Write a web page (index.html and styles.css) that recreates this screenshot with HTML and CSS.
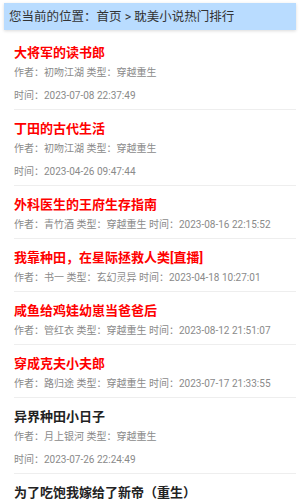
FILE: index.html
```html
<!DOCTYPE html>
<html lang="zh-CN">
<head>
  <meta charset="UTF-8">
  <meta name="viewport" content="width=device-width, initial-scale=1.0">
  <title>耽美小说热门排行</title>
  <link rel="stylesheet" href="styles.css">
</head>
<body>
  <div class="page">
    <div class="crumb">您当前的位置：<a href="#">首页</a> &gt; 耽美小说热门排行</div>

    <ul class="list">
      <li class="item hot">
        <h3 class="title">大将军的读书郎</h3>
        <p class="meta">作者：初吻江湖 类型：穿越重生 <span class="time">时间：2023-07-08 22:37:49</span></p>
      </li>
      <li class="item hot">
        <h3 class="title">丁田的古代生活</h3>
        <p class="meta">作者：初吻江湖 类型：穿越重生 <span class="time">时间：2023-04-26 09:47:44</span></p>
      </li>
      <li class="item hot">
        <h3 class="title">外科医生的王府生存指南</h3>
        <p class="meta">作者：青竹酒 类型：穿越重生 <span class="time">时间：2023-08-16 22:15:52</span></p>
      </li>
      <li class="item hot">
        <h3 class="title">我靠种田，在星际拯救人类[直播]</h3>
        <p class="meta">作者：书一 类型：玄幻灵异 <span class="time">时间：2023-04-18 10:27:01</span></p>
      </li>
      <li class="item hot">
        <h3 class="title">咸鱼给鸡娃幼崽当爸爸后</h3>
        <p class="meta">作者：管红衣 类型：穿越重生 <span class="time">时间：2023-08-12 21:51:07</span></p>
      </li>
      <li class="item hot">
        <h3 class="title">穿成克夫小夫郎</h3>
        <p class="meta">作者：路归途 类型：穿越重生 <span class="time">时间：2023-07-17 21:33:55</span></p>
      </li>
      <li class="item">
        <h3 class="title">异界种田小日子</h3>
        <p class="meta">作者：月上银河 类型：穿越重生 <span class="time">时间：2023-07-26 22:24:49</span></p>
      </li>
      <li class="item">
        <h3 class="title">为了吃饱我嫁给了新帝（重生）</h3>
        <p class="meta">作者：未知 类型：穿越重生 <span class="time">时间：2023-07-20 20:11:32</span></p>
      </li>
    </ul>
  </div>
</body>
</html>
```

FILE: styles.css
```css
*{
  margin:0;
  padding:0;
  box-sizing:border-box;
}
body{
  background-color:#fff;
  font-family:Roboto,"Noto Sans CJK SC",sans-serif;
  color:#222;
}
.page{
  padding:3px 4px 0 4px;
}
.crumb{
  background-color:#b9dcff;
  font-size:12.5px;
  line-height:27px;
  padding-left:5px;
  color:#333;
  box-shadow:0 1px 3px rgba(0,0,0,0.15);
}
.crumb a{
  color:#333;
  text-decoration:none;
}
.list{
  list-style:none;
  padding:4px 0 0 10px;
}
.item{
  padding:11px 0 2px 0;
  border-bottom:1px solid #eee;
}
.title{
  font-size:13px;
  line-height:16px;
  font-weight:700;
  color:#222;
}
.hot .title{
  color:#ff0000;
}
.meta{
  font-size:10px;
  line-height:23px;
  color:#8a8a8a;
  max-width:265px;
}
.time{
  display:inline-block;
}
```
